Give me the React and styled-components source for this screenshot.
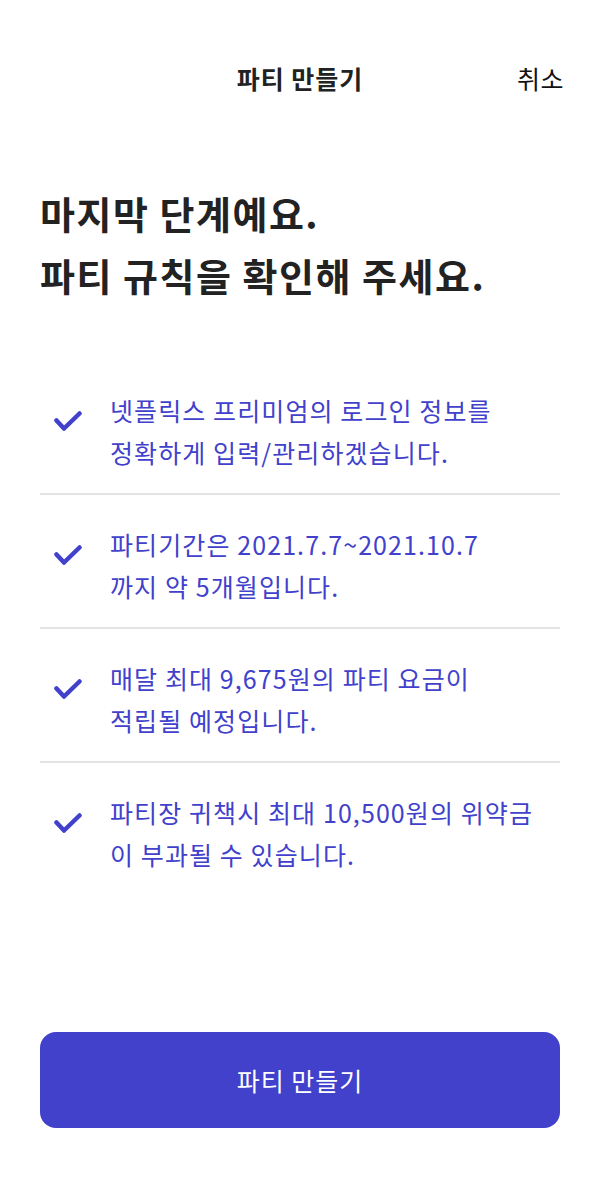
import React from 'react';
import styled, { createGlobalStyle } from 'styled-components';

const GlobalStyle = createGlobalStyle`
  html, body {
    margin: 0;
    padding: 0;
    background: #ffffff;
  }
  body {
    font-family: "Noto Sans CJK KR", "Noto Sans", sans-serif;
    color: #222222;
  }
`;

const Page = styled.div`
  width: 600px;
  height: 1200px;
  display: flex;
  flex-direction: column;
  box-sizing: border-box;
  padding: 0 40px;
`;

const Header = styled.header`
  height: 60px;
  margin-top: 48px;
  display: grid;
  grid-template-columns: 1fr auto 1fr;
  align-items: center;
`;

const HeaderTitle = styled.h1`
  grid-column: 2;
  margin: 0;
  font-size: 25px;
  font-weight: 700;
  letter-spacing: 1px;
  color: #222222;
`;

const CancelLink = styled.button`
  justify-self: end;
  border: none;
  background: none;
  padding: 0;
  margin-right: -4px;
  font-family: inherit;
  font-size: 25px;
  letter-spacing: 0.5px;
  color: #111111;
  cursor: pointer;
`;

const Heading = styled.h2`
  margin: 74px 0 0;
  font-size: 38px;
  font-weight: 700;
  letter-spacing: 1.5px;
  line-height: 62px;
  color: #222222;
`;

const RuleList = styled.ul`
  list-style: none;
  margin: 55px 0 0;
  padding: 0;
`;

const RuleItem = styled.li`
  display: flex;
  align-items: flex-start;
  padding: 28px 0 20px;
  border-bottom: ${({ $last }) => ($last ? 'none' : '2px solid #e4e4e4')};
`;

const CheckIcon = styled.svg`
  width: 28px;
  height: 20px;
  margin: 22px 28px 0 14px;
  flex-shrink: 0;
`;

const RuleText = styled.p`
  margin: 0;
  font-size: 25px;
  letter-spacing: 1.1px;
  line-height: 42px;
  color: #4141cc;
`;

const Spacer = styled.div`
  flex: 1;
`;

const PrimaryButton = styled.button`
  height: 96px;
  margin-bottom: 72px;
  border: none;
  border-radius: 16px;
  background: #4141cc;
  color: #ffffff;
  font-family: inherit;
  font-size: 25px;
  letter-spacing: 1px;
  cursor: pointer;
`;

const rules = [
  ['넷플릭스 프리미엄의 로그인 정보를', '정확하게 입력/관리하겠습니다.'],
  ['파티기간은 2021.7.7~2021.10.7', '까지 약 5개월입니다.'],
  ['매달 최대 9,675원의 파티 요금이', '적립될 예정입니다.'],
  ['파티장 귀책시 최대 10,500원의 위약금', '이 부과될 수 있습니다.'],
];

const Check = () => (
  <CheckIcon viewBox="0 0 28 20">
    <path
      d="M2.5 9.5 L10 17.5 L25.5 2.5"
      fill="none"
      stroke="#4141cc"
      strokeWidth="4.5"
      strokeLinecap="round"
      strokeLinejoin="round"
    />
  </CheckIcon>
);

const App = () => {
  return (
    <Page>
      <GlobalStyle />
      <Header>
        <HeaderTitle>파티 만들기</HeaderTitle>
        <CancelLink>취소</CancelLink>
      </Header>
      <Heading>
        마지막 단계예요.
        <br />
        파티 규칙을 확인해 주세요.
      </Heading>
      <RuleList>
        {rules.map((lines, i) => (
          <RuleItem key={i} $last={i === rules.length - 1}>
            <Check />
            <RuleText>
              {lines[0]}
              <br />
              {lines[1]}
            </RuleText>
          </RuleItem>
        ))}
      </RuleList>
      <Spacer />
      <PrimaryButton>파티 만들기</PrimaryButton>
    </Page>
  );
};

export default App;
